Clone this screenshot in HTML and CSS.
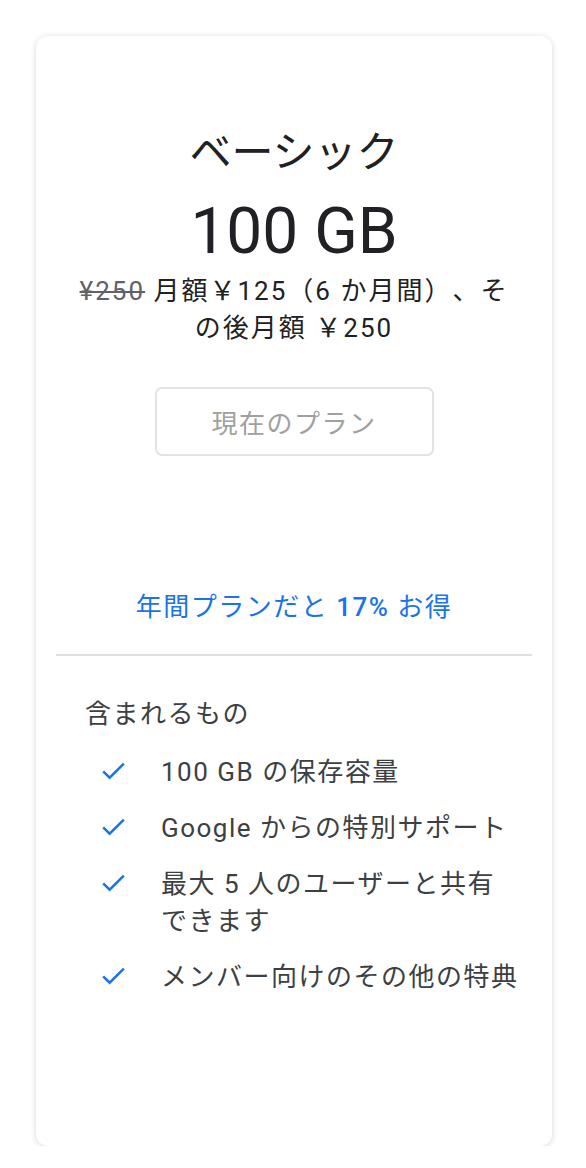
FILE: index.html
```html
<!DOCTYPE html>
<html lang="ja">
<head>
    <meta charset="UTF-8">
    <meta name="viewport" content="width=device-width, initial-scale=1.0">
    <title>ベーシック</title>
    <link rel="stylesheet" href="styles.css">
</head>
<body>
    <div class="plan-card">
        <div class="plan-head">
            <h1 class="plan-name">ベーシック</h1>
            <div class="plan-size">100 GB</div>
            <p class="plan-price"><s class="old-price">¥250</s> 月額￥125（6 か月間）、その後月額 ￥250</p>
            <button type="button" class="current-button" disabled>現在のプラン</button>
            <a class="yearly-link" href="#">年間プランだと <b>17%</b> お得</a>
        </div>
        <hr class="divider">
        <div class="plan-body">
            <h2 class="included-title">含まれるもの</h2>
            <ul class="feature-list">
                <li>
                    <svg class="check" viewBox="0 0 24 24"><polyline points="4,12.6 9,17.6 20,6.6" /></svg>
                    <span>100 GB の保存容量</span>
                </li>
                <li>
                    <svg class="check" viewBox="0 0 24 24"><polyline points="4,12.6 9,17.6 20,6.6" /></svg>
                    <span>Google からの特別サポート</span>
                </li>
                <li>
                    <svg class="check" viewBox="0 0 24 24"><polyline points="4,12.6 9,17.6 20,6.6" /></svg>
                    <span>最大 5 人のユーザーと共有できます</span>
                </li>
                <li>
                    <svg class="check" viewBox="0 0 24 24"><polyline points="4,12.6 9,17.6 20,6.6" /></svg>
                    <span>メンバー向けのその他の特典</span>
                </li>
            </ul>
        </div>
    </div>
</body>
</html>
```

FILE: styles.css
```css
body {
    font-family: Roboto, "Noto Sans CJK JP", sans-serif;
    background-color: #ffffff;
    color: #3c4043;
    margin: 0;
    padding: 36px 34px 0 36px;
    text-spacing-trim: space-all;
}

.plan-card {
    background: white;
    border-radius: 12px;
    box-shadow: 0 1px 6px rgba(0,0,0,0.16);
    min-height: 1110px;
    box-sizing: border-box;
    padding: 92px 20px 40px;
}

.plan-head {
    display: flex;
    flex-direction: column;
    align-items: center;
    text-align: center;
}

.plan-name {
    margin: 0;
    font-size: 42px;
    font-weight: 400;
    line-height: 50px;
    color: #202124;
}

.plan-size {
    margin-top: 16px;
    font-size: 64px;
    line-height: 76px;
    color: #202124;
}

.plan-price {
    width: 440px;
    margin: 3px 0 0;
    font-size: 26px;
    letter-spacing: 2px;
    line-height: 37px;
    color: #202124;
}

.old-price {
    color: #5f6368;
}

.current-button {
    margin-top: 40px;
    width: 279px;
    height: 69px;
    background: white;
    border: 2px solid #e3e3e3;
    border-radius: 7px;
    font-family: inherit;
    font-size: 26px;
    letter-spacing: 1.5px;
    color: #a0a0a0;
}

.yearly-link {
    margin-top: 133px;
    font-size: 26px;
    letter-spacing: 1.5px;
    line-height: 36px;
    color: #1a73e8;
    text-decoration: none;
}

.yearly-link b {
    font-weight: 500;
}

.divider {
    margin: 29px 0 0;
    border: none;
    border-top: 2px solid #e0e0e0;
}

.plan-body {
    padding: 0 0 0 29px;
}

.included-title {
    margin: 40px 0 0;
    font-size: 26px;
    letter-spacing: 1.5px;
    font-weight: 400;
    line-height: 36px;
    color: #3c4043;
}

.feature-list {
    list-style: none;
    margin: 22px 0 0;
    padding: 0 0 0 13px;
}

.feature-list li {
    display: flex;
    align-items: flex-start;
    gap: 32px;
    font-size: 26px;
    letter-spacing: 1.5px;
    line-height: 37px;
    margin-bottom: 19px;
    color: #3c4043;
}

.feature-list li span {
    max-width: 359px;
}

.check {
    flex: none;
    width: 31px;
    height: 31px;
    margin-top: 1px;
    fill: none;
    stroke: #1a73e8;
    stroke-width: 1.9;
}
```
